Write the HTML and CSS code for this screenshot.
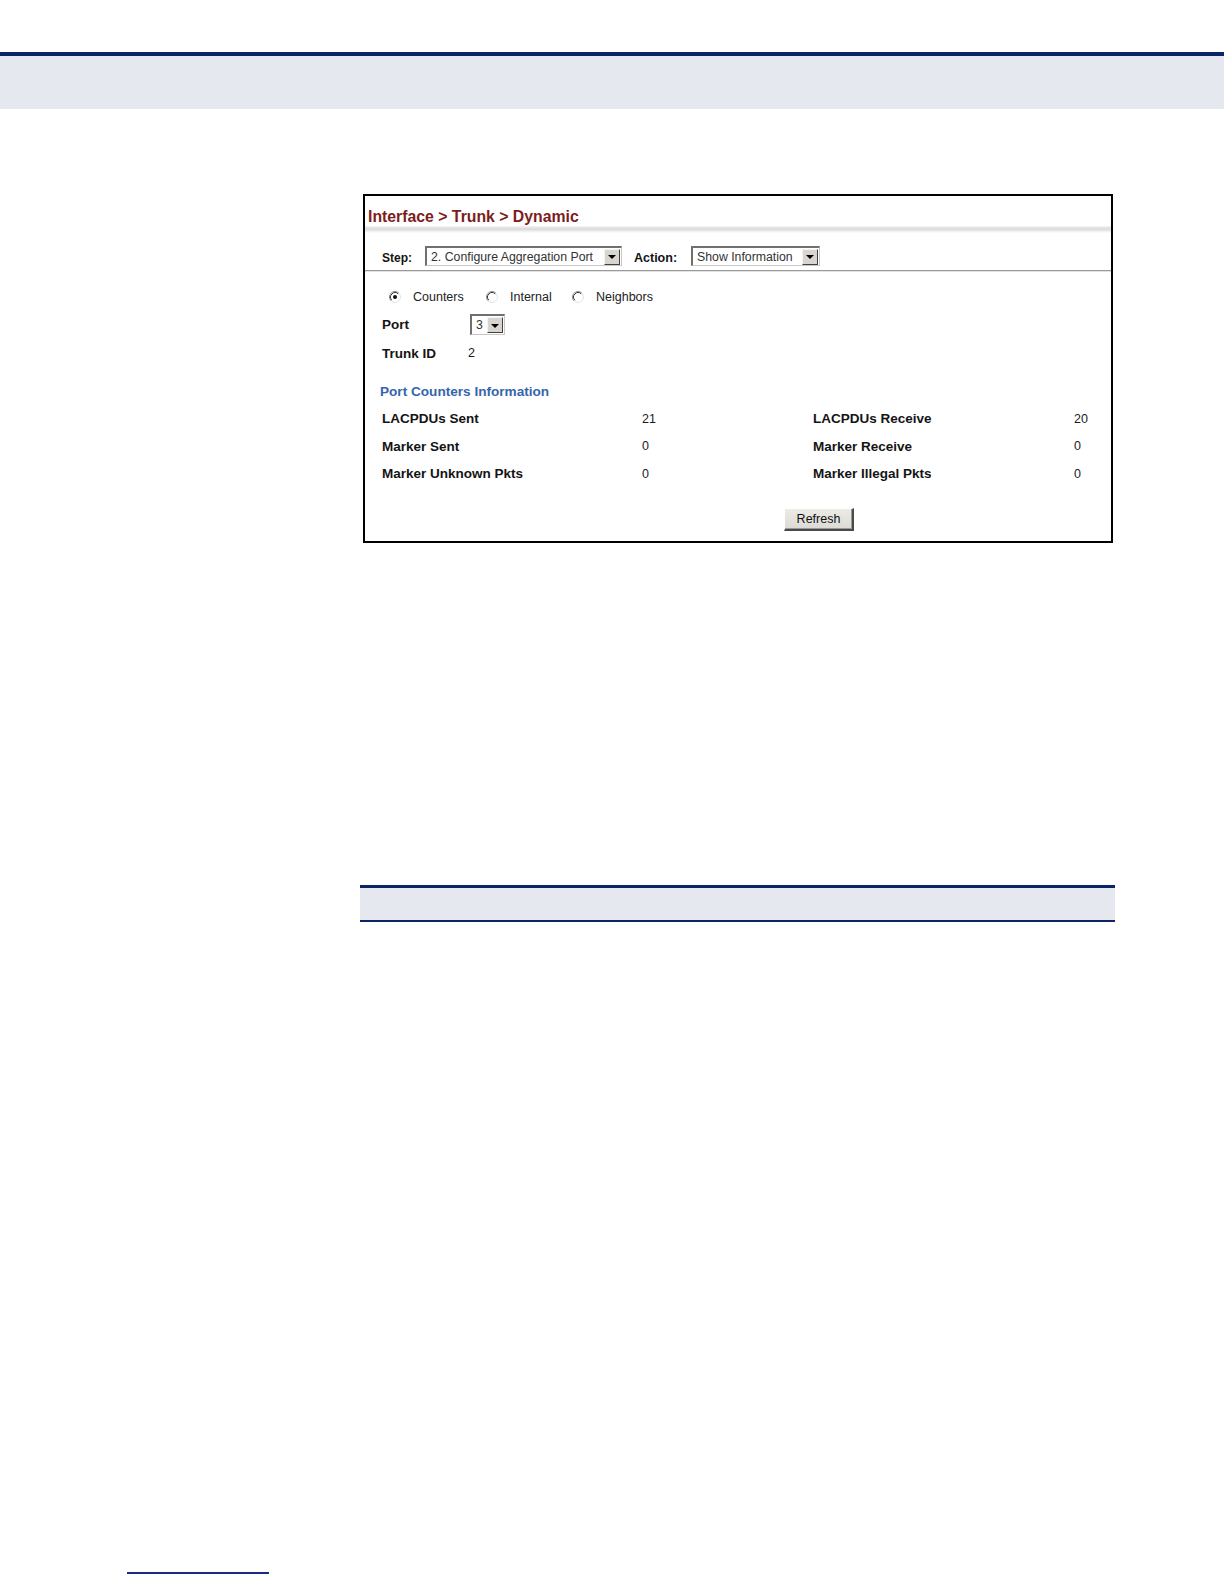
FILE: index.html
```html
<!DOCTYPE html>
<html>
<head>
<meta charset="utf-8">
<link rel="stylesheet" href="styles.css">
</head>
<body>
<div class="topbar"></div>

<div class="panel">
  <div class="title">Interface &gt; Trunk &gt; Dynamic</div>
  <div class="sep"></div>
  <div class="steprow">
    <span class="lbl step-lbl">Step:</span>
    <div class="select sel-step">
      <span class="sel-text">2. Configure Aggregation Port</span>
      <span class="sel-btn"><span class="tri"></span></span>
    </div>
    <span class="lbl action-lbl">Action:</span>
    <div class="select sel-action">
      <span class="sel-text">Show Information</span>
      <span class="sel-btn"><span class="tri"></span></span>
    </div>
  </div>

  <div class="content">
    <div class="radios">
      <div class="opt opt1">
        <svg class="radio" width="12" height="12" viewBox="0 0 12 12">
          <circle cx="6" cy="6" r="5" fill="#fff"/>
          <path d="M2.11 9.89 A5.5 5.5 0 0 1 9.89 2.11" fill="none" stroke="#8a8a8a" stroke-width="1"/>
          <path d="M9.89 2.11 A5.5 5.5 0 0 1 2.11 9.89" fill="none" stroke="#e4e4e4" stroke-width="1"/>
          <path d="M2.82 9.18 A4.5 4.5 0 0 1 9.18 2.82" fill="none" stroke="#3a3a3a" stroke-width="1"/>
          <circle cx="6" cy="6" r="2" fill="#111"/>
        </svg>
        <span class="opt-text">Counters</span>
      </div>
      <div class="opt opt2">
        <svg class="radio" width="12" height="12" viewBox="0 0 12 12">
          <circle cx="6" cy="6" r="5" fill="#fff"/>
          <path d="M2.11 9.89 A5.5 5.5 0 0 1 9.89 2.11" fill="none" stroke="#8a8a8a" stroke-width="1"/>
          <path d="M9.89 2.11 A5.5 5.5 0 0 1 2.11 9.89" fill="none" stroke="#e4e4e4" stroke-width="1"/>
          <path d="M2.82 9.18 A4.5 4.5 0 0 1 9.18 2.82" fill="none" stroke="#3a3a3a" stroke-width="1"/>
        </svg>
        <span class="opt-text">Internal</span>
      </div>
      <div class="opt opt3">
        <svg class="radio" width="12" height="12" viewBox="0 0 12 12">
          <circle cx="6" cy="6" r="5" fill="#fff"/>
          <path d="M2.11 9.89 A5.5 5.5 0 0 1 9.89 2.11" fill="none" stroke="#8a8a8a" stroke-width="1"/>
          <path d="M9.89 2.11 A5.5 5.5 0 0 1 2.11 9.89" fill="none" stroke="#e4e4e4" stroke-width="1"/>
          <path d="M2.82 9.18 A4.5 4.5 0 0 1 9.18 2.82" fill="none" stroke="#3a3a3a" stroke-width="1"/>
        </svg>
        <span class="opt-text">Neighbors</span>
      </div>
    </div>

    <div class="portrow">
      <span class="lbl port-lbl">Port</span>
      <div class="select sel-port">
        <span class="sel-text">3</span>
        <span class="sel-btn"><span class="tri"></span></span>
      </div>
    </div>

    <div class="trunkrow">
      <span class="lbl trunk-lbl">Trunk ID</span>
      <span class="val">2</span>
    </div>

    <div class="heading">Port Counters Information</div>

    <div class="counters">
      <span class="lbl">LACPDUs Sent</span><span class="val">21</span>
      <span class="lbl">LACPDUs Receive</span><span class="val">20</span>
      <span class="lbl">Marker Sent</span><span class="val">0</span>
      <span class="lbl">Marker Receive</span><span class="val">0</span>
      <span class="lbl">Marker Unknown Pkts</span><span class="val">0</span>
      <span class="lbl">Marker Illegal Pkts</span><span class="val">0</span>
    </div>

    <div class="btnrow">
      <button class="refresh" type="button">Refresh</button>
    </div>
  </div>
</div>

<div class="band"></div>

<div class="footline"></div>
</body>
</html>
```

FILE: styles.css
```css
html, body {
  margin: 0;
  padding: 0;
  background: #ffffff;
}

body {
  font-family: "Liberation Sans", Arial, sans-serif;
  color: #141414;
  width: 1224px;
}

.topbar {
  margin-top: 52px;
  height: 53px;
  border-top: 4px solid #0b2463;
  background: #e5e8ef;
}

.panel {
  margin: 85px 0 0 363px;
  width: 746px;
  border: 2px solid #000;
  background: #fff;
}

.title {
  padding: 12px 0 0 3px;
  height: 18px;
  line-height: 18px;
  font-size: 15.8px;
  font-weight: bold;
  color: #7d1c1c;
  white-space: nowrap;
}

.sep {
  height: 7px;
  background: linear-gradient(to bottom, #f4f4f4 0%, #d9d9d9 45%, #ececec 70%, #ffffff 100%);
}

.steprow {
  display: flex;
  align-items: center;
  padding: 13px 0 4px 17px;
  border-bottom: 1px solid #9a9a9a;
  box-shadow: 0 1px 0 #e2e2e2;
}

.lbl {
  font-weight: bold;
  font-size: 13.5px;
  white-space: nowrap;
}

.step-lbl {
  font-size: 12px;
  width: 43px;
  position: relative;
  top: 2px;
}

.action-lbl {
  font-size: 12.5px;
  margin-left: 12px;
  width: 57px;
  position: relative;
  top: 2px;
}

.select {
  display: flex;
  align-items: center;
  box-sizing: border-box;
  height: 20px;
  background: #fff;
  border-top: 2px solid #707070;
  border-left: 2px solid #707070;
  border-right: 1px solid #c8c8c8;
  border-bottom: 1px solid #c8c8c8;
}

.sel-step { width: 197px; }
.sel-action { width: 129px; }
.sel-port { width: 35px; height: 21px; }

.sel-text {
  flex: 1;
  padding-left: 4px;
  font-size: 12.3px;
  color: #333;
  white-space: nowrap;
  overflow: hidden;
}

.sel-btn {
  box-sizing: border-box;
  width: 16px;
  height: 16px;
  margin-right: 1px;
  background: #d8d5cf;
  border-top: 1px solid #f4f4f4;
  border-left: 1px solid #f4f4f4;
  border-right: 1px solid #404040;
  border-bottom: 1px solid #404040;
  display: flex;
  align-items: center;
  justify-content: center;
}

.tri {
  width: 0;
  height: 0;
  border-left: 4px solid transparent;
  border-right: 4px solid transparent;
  border-top: 4px solid #000;
  margin-top: 1px;
}

.content {
  padding: 18px 0 10px 17px;
}

.radios {
  display: flex;
  align-items: center;
  height: 16px;
  padding-left: 7px;
}

.opt {
  display: flex;
  align-items: center;
}

.opt1 { width: 97px; }
.opt2 { width: 86px; }
.opt3 { width: 100px; }

.radio {
  display: block;
  flex: none;
}

.opt-text {
  margin-left: 12px;
  font-size: 12.5px;
  color: #222;
  white-space: nowrap;
}

.portrow {
  display: flex;
  align-items: center;
  margin-top: 9px;
  height: 21px;
}

.port-lbl {
  width: 88px;
}

.trunkrow {
  display: flex;
  align-items: center;
  margin-top: 10px;
  height: 16px;
}

.trunk-lbl {
  width: 86px;
}

.val {
  font-size: 12.5px;
  color: #1a1a1a;
}

.heading {
  margin-top: 22px;
  margin-left: -2px;
  height: 18px;
  line-height: 18px;
  font-size: 13.6px;
  font-weight: bold;
  color: #3465ad;
  white-space: nowrap;
}

.counters {
  margin-top: 4px;
  display: grid;
  grid-template-columns: 260px 171px 261px auto;
  grid-auto-rows: 27.5px;
  align-items: center;
}

.btnrow {
  margin-top: 20px;
  padding-left: 402px;
  height: 23px;
}

.refresh {
  display: block;
  box-sizing: border-box;
  width: 70px;
  height: 23px;
  margin: 0;
  padding: 0;
  font-family: "Liberation Sans", Arial, sans-serif;
  font-size: 12.5px;
  color: #111;
  background: linear-gradient(to bottom, #ecebe6 0%, #dcdad4 100%);
  border-top: 1px solid #ffffff;
  border-left: 1px solid #ffffff;
  border-right: 2px solid #4a4a4a;
  border-bottom: 2px solid #4a4a4a;
  box-shadow: inset -1px -1px 0 #9a9a9a;
}

.band {
  margin: 342px 0 0 360px;
  width: 755px;
  height: 32px;
  border-top: 3px solid #0b2463;
  border-bottom: 2px solid #0b2463;
  background: #e5e8ef;
}

.footline {
  margin: 650px 0 0 127px;
  width: 142px;
  height: 2px;
  background: #1b2a8a;
}
```
